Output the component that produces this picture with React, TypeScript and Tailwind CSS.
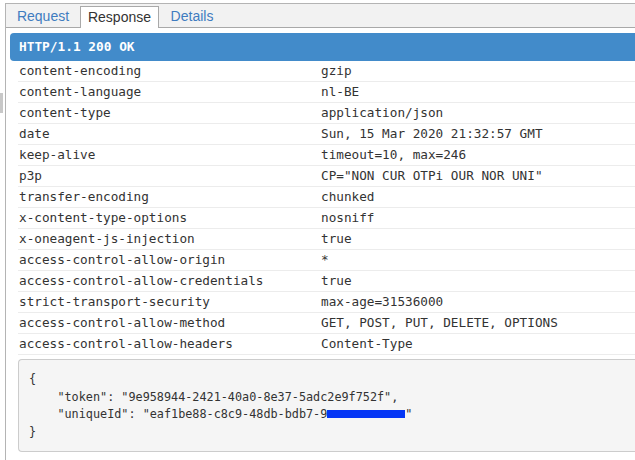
import React from "react";

const rows: [string, string][] = [
  ["content-encoding", "gzip"],
  ["content-language", "nl-BE"],
  ["content-type", "application/json"],
  ["date", "Sun, 15 Mar 2020 21:32:57 GMT"],
  ["keep-alive", "timeout=10, max=246"],
  ["p3p", 'CP="NON CUR OTPi OUR NOR UNI"'],
  ["transfer-encoding", "chunked"],
  ["x-content-type-options", "nosniff"],
  ["x-oneagent-js-injection", "true"],
  ["access-control-allow-origin", "*"],
  ["access-control-allow-credentials", "true"],
  ["strict-transport-security", "max-age=31536000"],
  ["access-control-allow-method", "GET, POST, PUT, DELETE, OPTIONS"],
  ["access-control-allow-headers", "Content-Type"],
];

const mono = { fontFamily: '"DejaVu Sans Mono", "Liberation Mono", monospace' };

export default function App() {
  return (
    <div className="w-[635px] h-[460px] bg-white overflow-hidden flex" style={{ fontFamily: '"Liberation Sans", Arial, sans-serif' }}>
      {/* left gutter with scroll thumb */}
      <div className="w-[5px] shrink-0 flex flex-col">
        <div className="mt-[93px] w-[3px] h-[20px] bg-[#c8c8c8]" />
      </div>
      {/* main panel */}
      <div className="flex-1 min-w-0 mt-[3px] border-l border-t border-[#b4b4b4] flex flex-col">
        {/* tab bar */}
        <div className="h-[24px] bg-[#f2f2f2] border-b border-[#a9a9a9] flex items-end text-[14px] leading-[21px]">
          <div className="w-[74px] h-[21px] flex items-center justify-center text-[#3f7cc0]">Request</div>
          <div className="w-[79px] h-[22px] -mb-[1px] bg-white border border-b-0 border-[#a9a9a9] flex items-center justify-center text-[#333]">
            Response
          </div>
          <div className="w-[66px] h-[21px] flex items-center justify-center text-[#3f7cc0]">Details</div>
        </div>
        {/* status header */}
        <div
          className="mt-[5px] ml-[4px] h-[28px] bg-[#428bca] rounded-l-[4px] flex items-center pl-[9px] text-white font-bold text-[12.8px]"
          style={mono}
        >
          HTTP/1.1 200 OK
        </div>
        {/* header rows */}
        <div className="ml-[12px] flex flex-col text-[12.7px] text-[#333]" style={mono}>
          {rows.map(([k, v]) => (
            <div key={k} className="grid grid-cols-[302px_1fr] h-[21px] border-b border-[#ececec] items-center">
              <div className="pl-[1px] whitespace-pre">{k}</div>
              <div className="pl-[1px] whitespace-pre">{v}</div>
            </div>
          ))}
        </div>
        {/* body */}
        <div
          className="mt-[4px] ml-[12px] h-[93px] bg-[#f5f5f5] border border-r-0 border-[#cccccc] rounded-l-[4px] pl-[10px] pt-[11px] text-[11.8px] leading-[17.6px] text-[#333] whitespace-pre"
          style={mono}
        >
          <div>{"{"}</div>
          <div>{'    "token": "9e958944-2421-40a0-8e37-5adc2e9f752f",'}</div>
          <div>
            {'    "uniqueId": "eaf1be88-c8c9-48db-bdb7-9'}
            <span className="inline-block w-[78px] h-[8px] bg-[#0536f5] align-middle relative top-[-1px]" />
            {'"'}
          </div>
          <div>{"}"}</div>
        </div>
      </div>
    </div>
  );
}
